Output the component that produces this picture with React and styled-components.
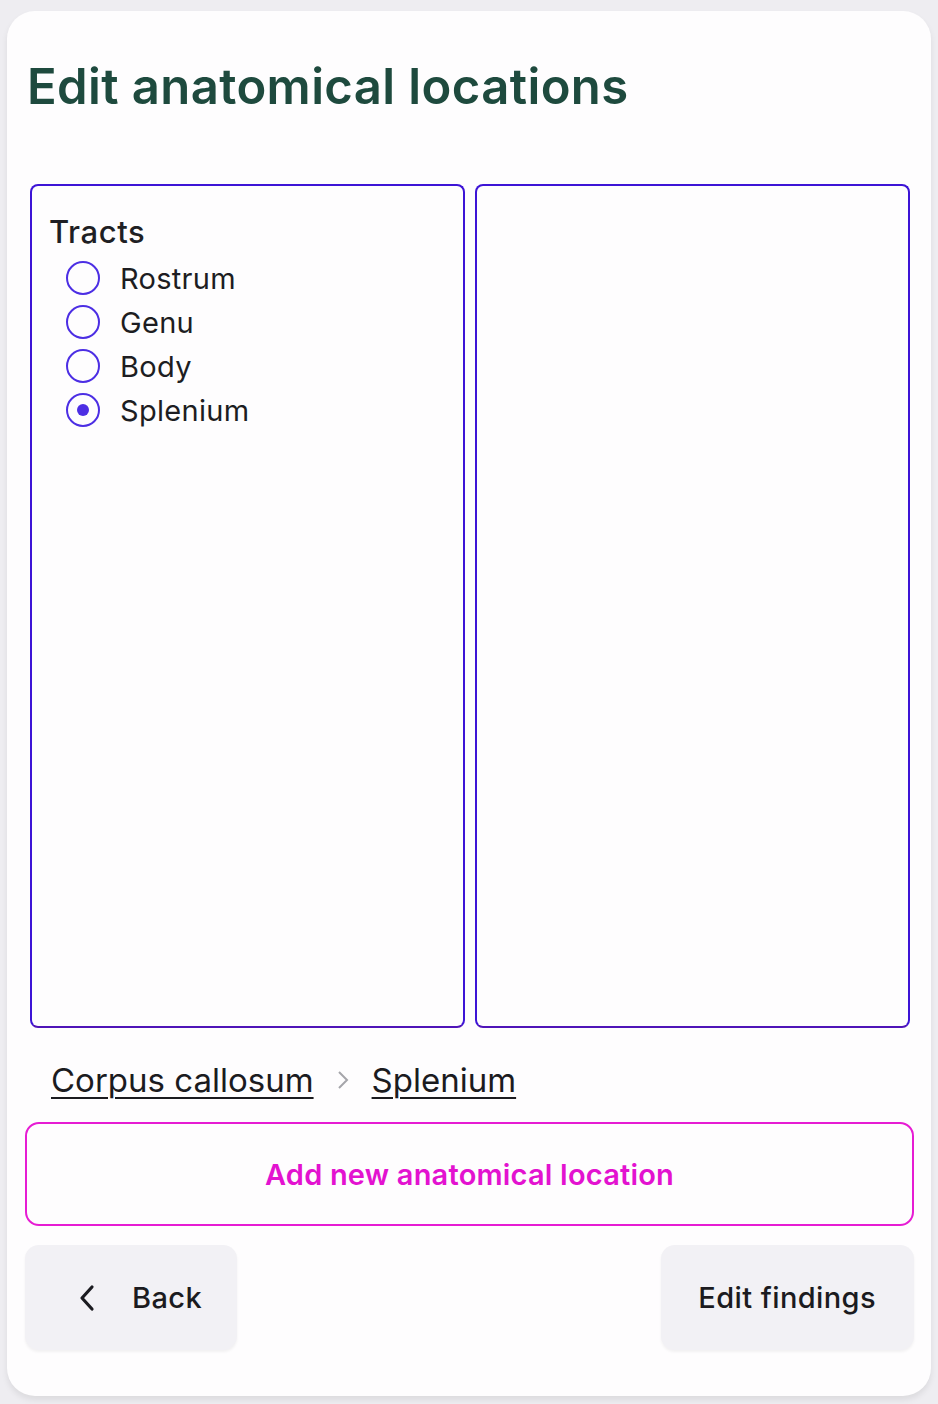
import React, { useState } from 'react'
import styled, { createGlobalStyle } from 'styled-components'

const GlobalStyle = createGlobalStyle`
    html, body {
        margin: 0;
        padding: 0;
        background: #eeedf1;
        font-family: "Inter", "Noto Sans", sans-serif;
    }
`

const Page = styled.div`
    padding: 11px 7px 8px 7px;
    min-height: 1404px;
    box-sizing: border-box;
`

const Card = styled.main`
    background: #fefdfe;
    border-radius: 28px;
    box-shadow: 0 4px 6px rgba(0, 0, 0, 0.08);
    padding: 50px 17px 46px 18px;
    display: flex;
    flex-direction: column;
    box-sizing: border-box;
`

const Title = styled.h1`
    margin: 0 0 0 2px;
    font-size: 49px;
    font-weight: 600;
    letter-spacing: 0.4px;
    color: #1e4a3e;
    line-height: 52px;
`

const Columns = styled.div`
    display: grid;
    grid-template-columns: 1fr 1fr;
    gap: 10px;
    margin: 71px 4px 0 5px;
    height: 844px;
    flex-shrink: 0;
`

const Panel = styled.section`
    border: 2px solid #3d14d6;
    border-bottom-color: #4f14b8;
    border-radius: 8px;
    padding: 26px 17px;
`

const GroupLabel = styled.div`
    font-size: 31px;
    font-weight: 500;
    letter-spacing: 0.6px;
    color: #1f1f24;
    line-height: 40px;
    margin-bottom: 4px;
`

const RadioList = styled.div`
    display: flex;
    flex-direction: column;
    padding-left: 17px;
`

const RadioRow = styled.label`
    display: flex;
    align-items: center;
    gap: 20px;
    height: 44px;
    cursor: pointer;
    font-size: 29px;
    letter-spacing: 0.3px;
    color: #1d1d22;
`

const Circle = styled.span`
    width: 30px;
    height: 30px;
    border: 2.5px solid #4c2ee4;
    border-radius: 50%;
    display: flex;
    align-items: center;
    justify-content: center;

    &::after {
        content: '';
        width: 12px;
        height: 12px;
        border-radius: 50%;
        background: #4c2ee4;
        display: ${(p) => (p.checked ? 'block' : 'none')};
    }
`

const Crumbs = styled.nav`
    display: flex;
    align-items: center;
    gap: 22px;
    margin: 30px 0 0 26px;
    height: 44px;
`

const Crumb = styled.a`
    font-size: 33px;
    color: #1b1b1f;
    text-decoration: underline;
    text-underline-offset: 5px;
    text-decoration-thickness: 2px;
`

const AddButton = styled.button`
    margin-top: 20px;
    height: 104px;
    flex-shrink: 0;
    border: 2px solid #e61cd3;
    border-radius: 14px;
    background: transparent;
    color: #e312d0;
    font-family: inherit;
    font-size: 29px;
    font-weight: 600;
    letter-spacing: 0.2px;
    cursor: pointer;
`

const Footer = styled.div`
    display: flex;
    justify-content: space-between;
    margin-top: 19px;
`

const NavButton = styled.button`
    display: flex;
    align-items: center;
    gap: 36px;
    height: 105px;
    padding: 0 ${(p) => p.padRight}px 0 ${(p) => p.padLeft}px;
    border: none;
    border-radius: 14px;
    background: #f2f1f5;
    box-shadow: 0 2px 3px rgba(0, 0, 0, 0.05);
    color: #1b1b20;
    font-family: inherit;
    font-size: 29px;
    font-weight: 500;
    letter-spacing: 0.4px;
    cursor: pointer;
`

const tracts = ['Rostrum', 'Genu', 'Body', 'Splenium']

function App() {
    const [value, setValue] = useState('Splenium')

    return (
        <>
            <GlobalStyle />
            <Page>
                <Card>
                    <Title>Edit anatomical locations</Title>
                    <Columns>
                        <Panel>
                            <GroupLabel>Tracts</GroupLabel>
                            <RadioList>
                                {tracts.map((t) => (
                                    <RadioRow key={t} onClick={() => setValue(t)}>
                                        <Circle checked={value === t} />
                                        {t}
                                    </RadioRow>
                                ))}
                            </RadioList>
                        </Panel>
                        <Panel />
                    </Columns>
                    <Crumbs>
                        <Crumb>Corpus callosum</Crumb>
                        <svg width="14" height="22" viewBox="0 0 14 22">
                            <path d="M3 3 L11 11 L3 19" fill="none" stroke="#a5a5aa" strokeWidth="2" />
                        </svg>
                        <Crumb>{value}</Crumb>
                    </Crumbs>
                    <AddButton>Add new anatomical location</AddButton>
                    <Footer>
                        <NavButton padLeft={53} padRight={35}>
                            <svg width="18" height="28" viewBox="0 0 18 28">
                                <path d="M14 3 L4 14 L14 25" fill="none" stroke="#1b1b20" strokeWidth="3.2" strokeLinecap="round" strokeLinejoin="round" />
                            </svg>
                            Back
                        </NavButton>
                        <NavButton padLeft={37} padRight={38}>Edit findings</NavButton>
                    </Footer>
                </Card>
            </Page>
        </>
    )
}

export default App
